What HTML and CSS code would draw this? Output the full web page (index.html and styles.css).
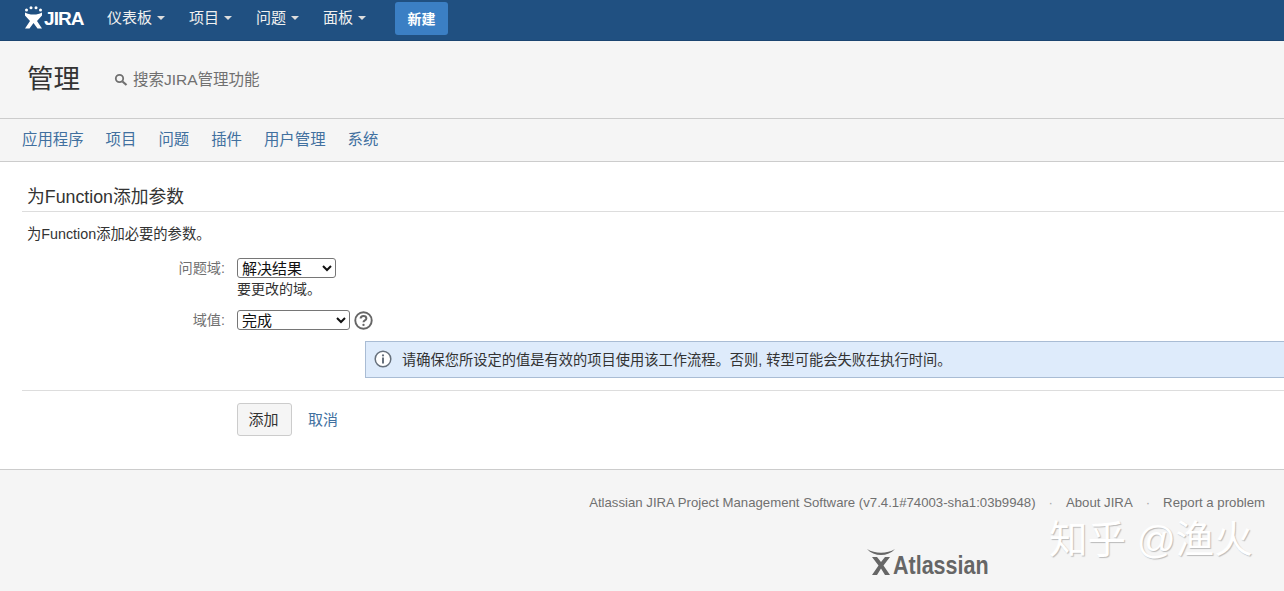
FILE: index.html
```html
<!DOCTYPE html>
<html lang="zh-CN">
<head>
<meta charset="utf-8">
<title>JIRA</title>
<link rel="stylesheet" href="styles.css">
</head>
<body>
<header class="topbar">
  <a class="logo">
    <svg class="logo-mark" width="19" height="24" viewBox="0 0 19 24"><g fill="#fff"><circle cx="2.500" cy="4" r="1.500"/><circle cx="7" cy="1.800" r="1.500"/><circle cx="12" cy="1.800" r="1.500"/><circle cx="16.500" cy="4" r="1.500"/><path d="M1 6.500c3 1.500 4.500 2 8.500 2s5.500-.5 8.500-2v3l-5 5.500 5 7.500h-4.500l-4-5.500-4 5.500H1l5-7.500-5-5.500z"/></g></svg>
    <span class="logo-text">JIRA</span>
  </a>
  <nav class="topnav">
    <a class="topitem">仪表板<i class="caret"></i></a>
    <a class="topitem">项目<i class="caret"></i></a>
    <a class="topitem">问题<i class="caret"></i></a>
    <a class="topitem">面板<i class="caret"></i></a>
  </nav>
  <a class="create">新建</a>
</header>
<section class="admin-head">
  <h1 class="admin-title">管理</h1>
  <div class="admin-search">
    <svg width="14" height="14" viewBox="0 0 14 14"><circle cx="5.500" cy="5.500" r="3.700" fill="none" stroke="#707070" stroke-width="1.800"/><path d="M8.500 8.500l4 3.500" stroke="#707070" stroke-width="2.200"/></svg>
    <span>搜索JIRA管理功能</span>
  </div>
</section>
<nav class="tabs">
  <a>应用程序</a><a>项目</a><a>问题</a><a>插件</a><a>用户管理</a><a>系统</a>
</nav>
<main class="content">
  <h2 class="form-title">为Function添加参数</h2>
  <p class="form-desc">为Function添加必要的参数。</p>
  <div class="field field-first">
    <label class="label">问题域:</label>
    <div class="control">
      <select class="sel sel-a"><option>解决结果</option></select>
      <div class="hint">要更改的域。</div>
    </div>
  </div>
  <div class="field field-second">
    <label class="label">域值:</label>
    <div class="control control-row">
      <select class="sel sel-b"><option>完成</option></select>
      <svg class="help" width="19" height="19" viewBox="0 0 18 18"><circle cx="9" cy="9" r="7.800" fill="none" stroke="#666" stroke-width="1.800"/><path d="M6.300 7.200c0-1.500 1.200-2.400 2.700-2.400s2.700.9 2.700 2.300c0 1.800-2.700 1.800-2.700 3.500" fill="none" stroke="#666" stroke-width="1.900"/><circle cx="9" cy="13.200" r="1.100" fill="#666"/></svg>
    </div>
  </div>
  <div class="notice">
    <svg class="notice-icon" width="18" height="18" viewBox="0 0 18 18"><circle cx="9" cy="9" r="7.800" fill="#fff" stroke="#66707c" stroke-width="1.500"/><circle cx="9" cy="5.400" r="1.100" fill="#66707c"/><rect x="8" y="7.500" width="2" height="6" fill="#66707c"/></svg>
    <span>请确保您所设定的值是有效的项目使用该工作流程。否则, 转型可能会失败在执行时间。</span>
  </div>
  <div class="actions">
    <button class="btn">添加</button>
    <a class="cancel">取消</a>
  </div>
</main>
<footer class="footer">
  <div class="foot-links">
    <span>Atlassian JIRA Project Management Software (v7.4.1#74003-sha1:03b9948)</span>
    <span class="dot">·</span>
    <span>About JIRA</span>
    <span class="dot">·</span>
    <span>Report a problem</span>
  </div>
  <div class="foot-brand">
    <span class="atl">
      <svg width="30" height="29" viewBox="0 0 30 29"><g fill="#666"><path d="M1 1c8 5 20 5 28 0-7 8-21 8-28 0z"/><path d="M6 9h5l4 5 4-5h5l-6.500 8.500L24 27h-5l-4-6.500-4 6.500H6l6.500-9.500z"/></g></svg>
      <span class="atl-text">Atlassian</span>
    </span>
    <span class="watermark">知乎 @渔火</span>
  </div>
</footer>
</body>
</html>
```
FILE: styles.css
```css
* { box-sizing: border-box; }
html, body { margin: 0; padding: 0; }
body {
  width: 1284px; height: 591px; overflow: hidden;
  background: #f5f5f5; color: #333;
  font: 14px/20px "Liberation Sans", "Noto Sans CJK SC", sans-serif;
}
.topbar {
  height: 41px; background: #205081; border-bottom: 1px solid #1b4571;
  display: flex; align-items: flex-start; padding-left: 24px; color: #fff;
}
.logo { display: flex; align-items: center; height: 35px; width: 83px; gap: 1px; }
.logo-mark { flex: none; }
.logo-text { font-size: 19px; font-weight: 700; letter-spacing: -.9px; line-height: 24px; padding-top: 2px; }
.topnav { display: flex; gap: 24px; height: 35px; align-items: center; }
.topitem { display: flex; align-items: center; color: #f0f0f0; font-size: 15px; }
.caret {
  display: block; width: 0; height: 0; margin-left: 5px; margin-top: 1px;
  border: 4.500px solid transparent; border-top-color: #ddd; border-bottom: 0;
}
.create {
  margin: 2px 0 0 29px; width: 53px; height: 33px; border-radius: 3px;
  background: #3b7fc4; color: #fff; font-weight: 700;
  display: flex; align-items: center; justify-content: center;
}
.admin-head {
  height: 78px; padding-left: 27px; display: flex; align-items: center;
  border-bottom: 1px solid #ccc;
}
.admin-title { margin: 0 0 2px; width: 87px; font-size: 26.500px; line-height: 30px; font-weight: 400; color: #333; }
.admin-search { display: flex; align-items: center; gap: 5px; color: #707070; font-size: 15.500px; margin-top: 1px; }
.tabs {
  height: 43px; padding: 0 0 0 22px; display: flex; gap: 22px; align-items: center;
  border-bottom: 1px solid #ccc; font-size: 15.400px;
}
.tabs a { color: #41709f; }
.content {
  height: 308px; background: #fff; border-bottom: 1px solid #ccc;
  padding: 22px 0 0 22px;
}
.form-title {
  margin: 0; padding-left: 5px; height: 28px; font-size: 17.800px; line-height: 26px; font-weight: 400;
  border-bottom: 1px solid #ddd; color: #333;
}
.form-desc { margin: 0; padding: 12px 0 0 5px; font-size: 14.300px; line-height: 20px; }
.field { display: flex; }
.field-first { margin-top: 14px; }
.field-second { margin-top: 11px; }
.label { width: 203px; text-align: right; font-size: 14.200px; color: #707070; line-height: 20px; }
.control { margin-left: 12px; }
.control-row { display: flex; align-items: center; gap: 4px; }
.sel {
  display: block; height: 20px; padding: 0; border: 1px solid #767676; border-radius: 3px;
  background: #fff; color: #111; font: 15px/18px "Liberation Sans", "Noto Sans CJK SC", sans-serif;
}
.sel-a { width: 99px; }
.sel-b { width: 113px; }
.hint { font-size: 14px; line-height: 20px; color: #333; padding-top: 1px; }
.notice {
  margin: 11px 0 0 343px; height: 37px; display: flex; align-items: center; gap: 10px;
  padding-left: 8px; background: #deebfb; border: 1px solid #a9bcd4; border-right: 0;
  font-size: 14.260px;
}
.notice-icon { margin-bottom: 2px; }
.actions {
  margin-top: 12px; height: 47px; border-top: 1px solid #ddd; padding: 12px 0 0 215px;
  display: flex; align-items: flex-start; gap: 16px;
}
.btn {
  width: 55px; height: 33px; padding: 0 2px 0 0; border: 1px solid #ccc; border-radius: 3px;
  background: #f5f5f5; color: #333; font: 15px/20px "Liberation Sans", "Noto Sans CJK SC", sans-serif;
}
.cancel { color: #41709f; line-height: 33px; font-size: 15px; }
.footer { padding: 23px 19px 0 0; color: #707070; font-size: 13.190px; }
.foot-links { display: flex; justify-content: flex-end; gap: 13px; line-height: 20px; }
.dot { color: #aaa; }
.foot-brand { display: flex; margin-top: 8px; padding-left: 866px; height: 50px; align-items: flex-start; }
.atl { display: flex; align-items: flex-end; height: 40px; width: 183px; margin-top: 16px; }
.atl-text { font-size: 25px; font-weight: 700; color: #666; line-height: 24px; margin-left: -3px; transform: scaleX(.86); transform-origin: left center; }
.watermark { font-size: 38.500px; line-height: 38px; color: #fff; white-space: nowrap; text-shadow: 1px 1px 1px #bbb; }
```
